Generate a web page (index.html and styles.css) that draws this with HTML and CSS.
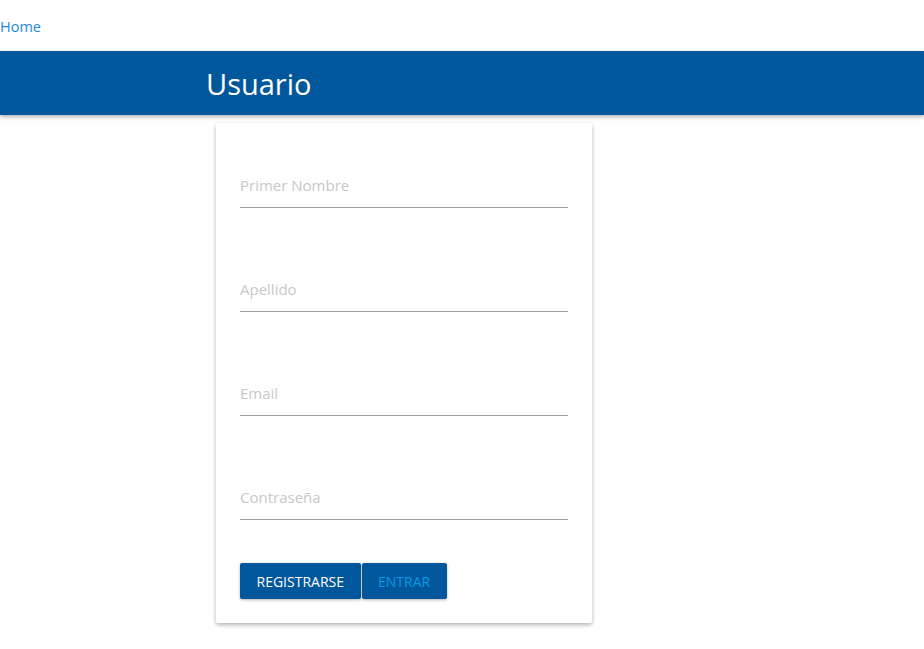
FILE: index.html
```html
<!DOCTYPE html>
<html lang="es">
<head>
<meta charset="utf-8">
<title>Usuario</title>
<link rel="stylesheet" href="styles.css">
</head>
<body>
<nav class="topnav"><a class="home-link" href="#">Home</a></nav>
<header class="toolbar"><h1 class="toolbar-title">Usuario</h1></header>
<main class="page">
  <form class="card">
    <div class="field"><input class="field-input" type="text" placeholder="Primer Nombre"></div>
    <div class="field"><input class="field-input" type="text" placeholder="Apellido"></div>
    <div class="field"><input class="field-input" type="email" placeholder="Email"></div>
    <div class="field"><input class="field-input" type="password" placeholder="Contraseña"></div>
    <div class="actions">
      <button type="button" class="btn btn-primary">Registrarse</button>
      <button type="button" class="btn btn-secondary">Entrar</button>
    </div>
  </form>
</main>
</body>
</html>
```
FILE: styles.css
```css
* { box-sizing: border-box; }
html, body {
  margin: 0;
  padding: 0;
  background: #fff;
  font-family: "Open Sans", "Noto Sans", sans-serif;
}
body { min-height: 649px; }
.topnav {
  height: 51px;
  padding-top: 15px;
}
.home-link {
  color: #1e88e5;
  text-decoration: none;
  font-size: 14.5px;
  line-height: 20px;
}
.toolbar {
  background: #01579b;
  height: 64px;
  padding-left: 206px;
  display: flex;
  align-items: center;
  box-shadow: 0 2px 4px rgba(0,0,0,0.3);
  position: relative;
  z-index: 1;
}
.toolbar-title {
  margin: 0;
  color: #fff;
  font-weight: 400;
  font-size: 29px;
  line-height: 40px;
  padding-top: 2px;
}
.page {
  padding: 8px 0 26px 216px;
}
.card {
  width: 376px;
  height: 500px;
  background: #fff;
  border-radius: 2px;
  box-shadow: 0 2px 4px rgba(0,0,0,0.3);
  padding: 24px;
  display: flex;
  flex-direction: column;
}
.field {
  height: 61px;
  margin-bottom: 43px;
  display: flex;
  align-items: flex-end;
}
.field-input {
  width: 100%;
  border: none;
  border-bottom: 1px solid #9e9e9e;
  outline: none;
  font-family: inherit;
  font-size: 15px;
  padding: 0 0 12px 0;
  height: 34px;
  color: #333;
  background: transparent;
}
.field-input::placeholder { color: #c8c8c8; }
.actions {
  display: flex;
  gap: 1px;
}
.btn {
  height: 36px;
  border: none;
  border-radius: 2px;
  background: #01579b;
  font-family: inherit;
  font-size: 14px;
  text-transform: uppercase;
  padding: 0 16.5px;
  box-shadow: 0 1px 3px rgba(0,0,0,0.3);
}
.btn-primary { color: #fff; }
.btn-secondary { color: #039be5; }
```
